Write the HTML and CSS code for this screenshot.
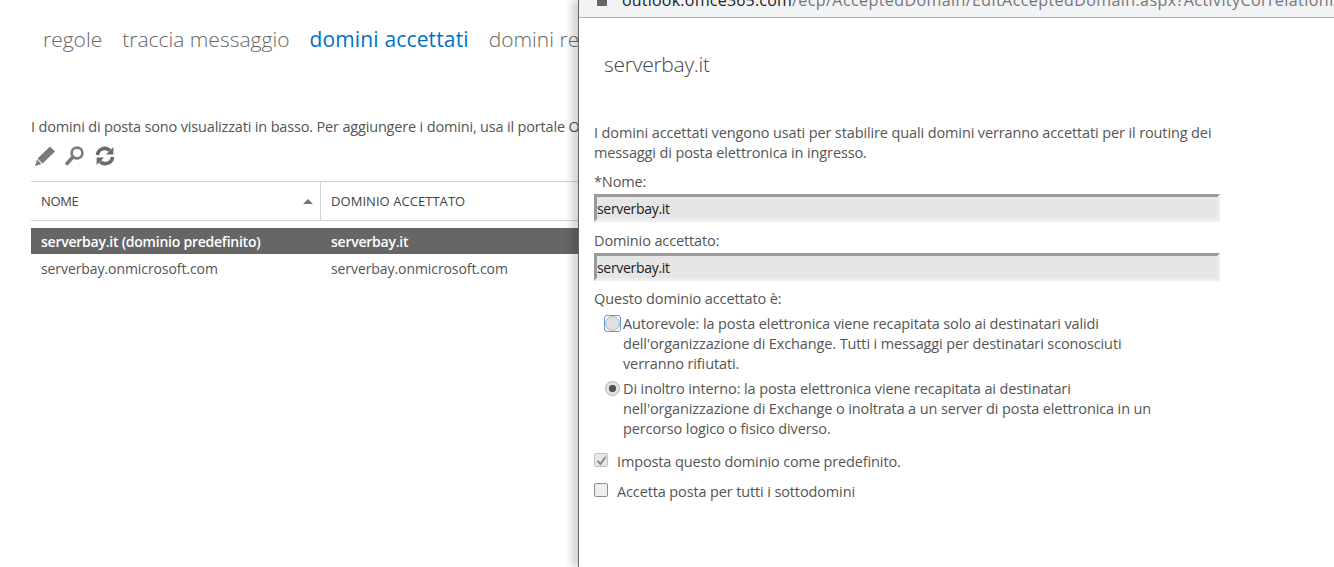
FILE: index.html
```html
<!DOCTYPE html>
<html lang="it">
<head>
<meta charset="utf-8">
<title>domini accettati</title>
<link rel="stylesheet" href="styles.css">
</head>
<body>
<main class="page">
  <nav class="tabs">
    <span class="tab">regole</span>
    <span class="tab">traccia messaggio</span>
    <span class="tab active">domini accettati</span>
    <span class="tab">domini re</span>
  </nav>
  <p class="intro">I domini di posta sono visualizzati in basso. Per aggiungere i domini, usa il portale O</p>
  <div class="toolbar">
    <svg class="tool" width="22" height="22" viewBox="0 0 22 22"><path d="M16 1.5l5 5L8.5 18.5l-5-5z" fill="#7a7a7a"/><path d="M3 14.5l4.5 4.5L1 21z" fill="#7a7a7a"/></svg>
    <svg class="tool" width="22" height="22" viewBox="0 0 22 22"><circle cx="13" cy="8" r="5.4" fill="none" stroke="#7a7a7a" stroke-width="2.6"/><path d="M9 12l-6 6.5" stroke="#7a7a7a" stroke-width="3.6" stroke-linecap="round"/></svg>
    <svg class="tool" width="22" height="22" viewBox="0 0 22 22"><path d="M3.4 10A7.4 7.4 0 0 1 15.8 5.4" fill="none" stroke="#6a6a6a" stroke-width="3.6"/><path d="M19.4 2v7.4H12z" fill="#6a6a6a"/><path d="M18.6 12A7.4 7.4 0 0 1 6.2 16.6" fill="none" stroke="#6a6a6a" stroke-width="3.6"/><path d="M2.6 20v-7.4H10z" fill="#6a6a6a"/></svg>
  </div>
  <div class="grid">
    <div class="head">
      <div class="hcell first">NOME<span class="sort"></span></div>
      <div class="hcell">DOMINIO ACCETTATO</div>
    </div>
    <div class="row selected"><span class="c1">serverbay.it (dominio predefinito)</span><span class="c2">serverbay.it</span></div>
    <div class="row"><span class="c1">serverbay.onmicrosoft.com</span><span class="c2">serverbay.onmicrosoft.com</span></div>
  </div>
</main>
<section class="window">
  <div class="urlbar">
    <span class="lock"></span>
    <span class="url"><span class="host">outlook.office365.com</span><span class="path">/ecp/AcceptedDomain/EditAcceptedDomain.aspx?ActivityCorrelationI</span></span>
  </div>
  <div class="content">
    <h1 class="title">serverbay.it</h1>
    <p class="desc">I domini accettati vengono usati per stabilire quali domini verranno accettati per il routing dei messaggi di posta elettronica in ingresso.</p>
    <div class="label l1">*Nome:</div>
    <div class="field">serverbay.it</div>
    <div class="label l2">Dominio accettato:</div>
    <div class="field">serverbay.it</div>
    <div class="label l3">Questo dominio accettato è:</div>
    <div class="radio r1">
      <span class="focus"><span class="dot"></span></span>
      <span class="rtext">Autorevole: la posta elettronica viene recapitata solo ai destinatari validi dell'organizzazione di Exchange. Tutti i messaggi per destinatari sconosciuti verranno rifiutati.</span>
    </div>
    <div class="radio r2">
      <span class="focus plain"><span class="dot on"></span></span>
      <span class="rtext">Di inoltro interno: la posta elettronica viene recapitata ai destinatari nell'organizzazione di Exchange o inoltrata a un server di posta elettronica in un percorso logico o fisico diverso.</span>
    </div>
    <div class="check c-one">
      <span class="box disabled"><svg width="11" height="11" viewBox="0 0 11 11"><path d="M1.5 6l3 3 5-7" fill="none" stroke="#8a8a8a" stroke-width="2"/></svg></span>
      <span>Imposta questo dominio come predefinito.</span>
    </div>
    <div class="check c-two">
      <span class="box"></span>
      <span>Accetta posta per tutti i sottodomini</span>
    </div>
  </div>
</section>
</body>
</html>
```
FILE: styles.css
```css
* { box-sizing: border-box; }
html, body { margin: 0; height: 100%; overflow: hidden; }
body {
  width: 1334px;
  height: 567px;
  position: relative;
  background: #fff;
  font-family: "Open Sans", "Liberation Sans", sans-serif;
  font-size: 14px;
  color: #555;
}
.page { padding: 24px 0 0 31px; width: 579px; overflow: hidden; height: 567px; }
.tabs { display: flex; gap: 20px; padding-left: 12px; white-space: nowrap; font-size: 21px; font-weight: 300; line-height: 30px; color: #666; }
.tab.active { color: #0072c6; font-weight: 400; letter-spacing: 0.15px; }
.intro { margin: 63px 0 0; white-space: nowrap; font-size: 14.5px; line-height: 20px; letter-spacing: -0.17px; color: #555; }
.toolbar { display: flex; gap: 8px; margin-top: 8px; height: 22px; padding-left: 3px; }
.grid { margin-top: 14px; width: 1000px; font-size: 14px; letter-spacing: -0.08px; }
.head { display: flex; height: 40px; border-top: 1px solid #cfd3d6; border-bottom: 1px solid #cfd3d6; }
.hcell { padding-left: 10px; line-height: 38px; color: #444; font-size: 13px; letter-spacing: 0.05px; }
.hcell.first { width: 290px; border-right: 1px solid #cfd3d6; position: relative; letter-spacing: -0.35px; }
.sort { position: absolute; right: 7px; top: 17px; border: 5px solid transparent; border-top: 0; border-bottom: 5px solid #777; }
.row { display: flex; height: 26px; line-height: 26px; color: #555; }
.row.selected { margin-top: 7px; height: 26px; line-height: 28px; background: #666; color: #fff; font-weight: 600; letter-spacing: -0.24px; }
.c1 { width: 290px; padding-left: 10px; flex: none; }
.c2 { padding-left: 10px; }
.row.selected + .row { height: 30px; line-height: 30px; }
.window {
  position: absolute;
  left: 578px;
  top: 0;
  width: 756px;
  height: 567px;
  background: #fff;
  border-left: 1px solid #666;
  box-shadow: -6px 0 8px rgba(0,0,0,.18);
}
.urlbar { height: 18px; background: #f2f3f5; border-bottom: 1px solid #b4b4b4; position: relative; overflow: hidden; white-space: nowrap; }
.lock { position: absolute; left: 18px; top: -3px; width: 10px; height: 9px; background: #666; border-radius: 1px; }
.url { position: absolute; left: 43px; top: -11px; font-size: 16px; line-height: 22px; color: #777; letter-spacing: 0.2px; }
.path { letter-spacing: 0.42px; }
.host { color: #222; }
.content { padding: 0 0 0 15px; width: 641px; }
.title { margin: 31px 0 0 10px; font-size: 21px; font-weight: 300; line-height: 30px; color: #444; letter-spacing: -0.25px; }
.desc { margin: 44px 0 0; font-size: 14.5px; line-height: 20px; letter-spacing: -0.12px; color: #555; width: 626px; }
.label { font-size: 14.5px; line-height: 20px; letter-spacing: -0.12px; color: #555; }
.l1 { margin-top: 9px; }
.l2 { margin-top: 9px; }
.l3 { margin-top: 8px; }
.field {
  width: 626px;
  height: 28px;
  margin-top: 2px;
  background: #e6e6e6;
  border-style: solid;
  border-width: 3px;
  border-color: #9a9a9a #eeeeee #eeeeee #9a9a9a;
  font-size: 14px;
  line-height: 23px;
  letter-spacing: -0.3px;
  color: #222;
}
.radio { display: flex; margin-left: 10px; font-size: 14.5px; line-height: 20px; letter-spacing: -0.12px; color: #555; }
.r1 { margin-top: 5px; }
.r2 { margin-top: 5px; }
.rtext { width: 532px; }
.focus { flex: none; width: 17px; height: 17px; margin: 1px 2px 0 0; border: 1px solid #5b9bef; border-radius: 3px; display: flex; align-items: center; justify-content: center; }
.focus.plain { border-color: transparent; }
.dot { width: 15px; height: 15px; border-radius: 50%; border: 1px solid #b4b4b4; background: #e0e0e0; position: relative; flex: none; }
.dot.on { background: radial-gradient(circle, #555 0 3.4px, #e2e2e2 4px); }
.check { display: flex; align-items: center; gap: 9px; font-size: 14.5px; line-height: 20px; letter-spacing: -0.13px; color: #555; }
.c-one { margin-top: 13px; }
.c-two { margin-top: 10px; }
.box { width: 14px; height: 14px; border: 1px solid #8f8f8f; border-radius: 2px; background: #eee; display: flex; align-items: center; justify-content: center; flex: none; margin-top: -4px; }
.box.disabled { border-color: #c4c4c4; background: #e6e6e6; }
```
